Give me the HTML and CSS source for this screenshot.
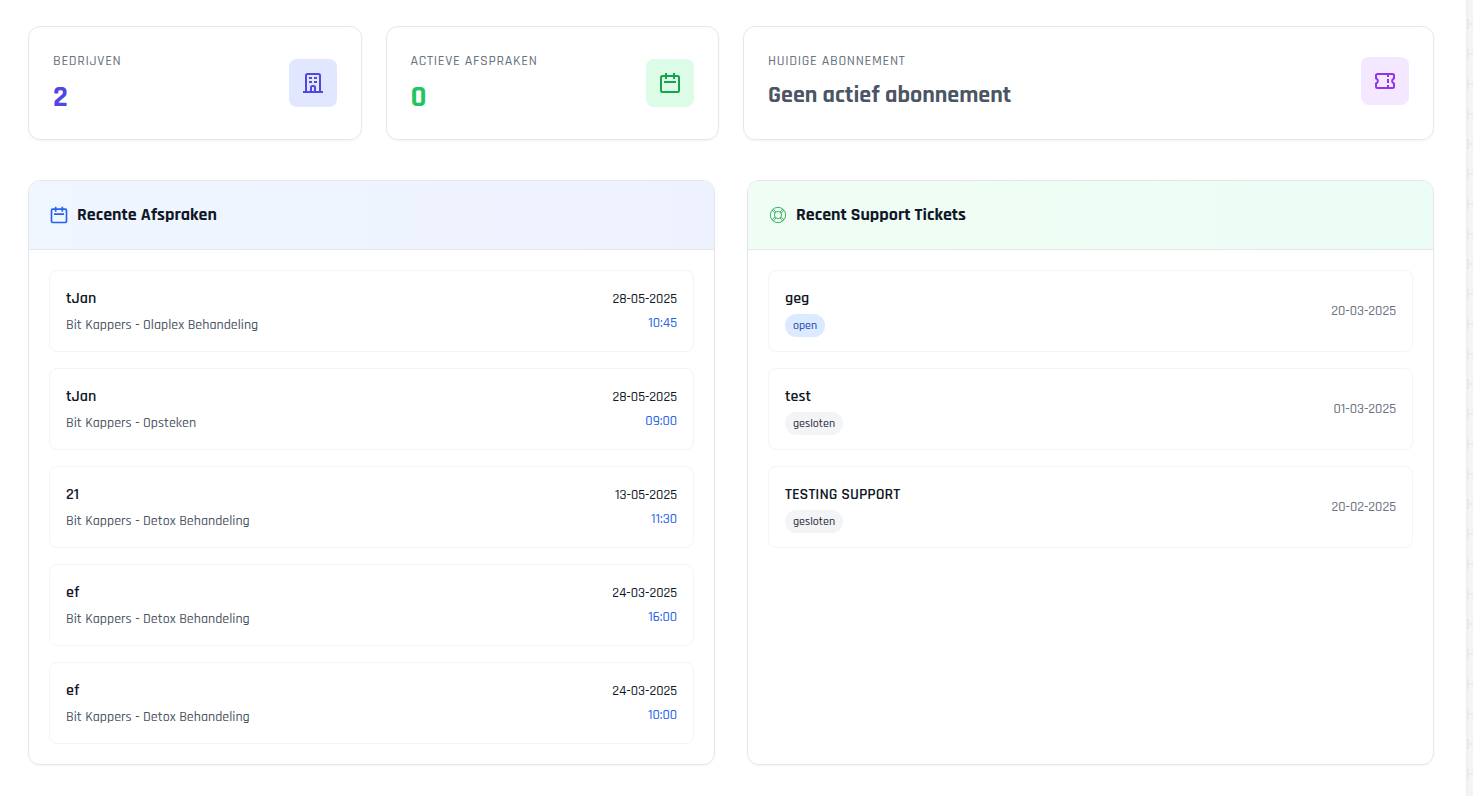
FILE: index.html
```html
<!DOCTYPE html>
<html lang="nl">
<head>
  <meta charset="UTF-8">
  <meta name="viewport" content="width=device-width, initial-scale=1.0">
  <title>Dashboard</title>
  <link rel="stylesheet" href="styles.css">
</head>
<body>

  <!-- shared icons -->
  <svg class="sprite" aria-hidden="true">
    <symbol id="icon-building" viewBox="0 0 24 24">
      <path d="M2 21H22M5 21V4.500Q5 3 6.500 3H17.500Q19 3 19 4.500V21M10 21V16.500Q10 15 11.500 15H12.500Q14 15 14 16.500V21" fill="none" stroke="currentColor" stroke-width="2"/>
      <path d="M8 7H11M13 7H16M8 11H11M13 11H16" fill="none" stroke="currentColor" stroke-width="2"/>
    </symbol>
    <symbol id="icon-calendar" viewBox="0 0 24 24">
      <rect x="3" y="5" width="18" height="16" rx="1.500" fill="none" stroke="currentColor" stroke-width="2"/>
      <path d="M8 2V8M16 2V8M6 11H18" fill="none" stroke="currentColor" stroke-width="2"/>
    </symbol>
    <symbol id="icon-ticket" viewBox="0 0 24 24">
      <path d="M4.500 5H19.500Q21 5 21 6.500V9.500A2.600 2.600 0 0 0 21 14.500V17.500Q21 19 19.500 19H4.500Q3 19 3 17.500V14.500A2.600 2.600 0 0 0 3 9.500V6.500Q3 5 4.500 5Z" fill="none" stroke="currentColor" stroke-width="2" stroke-linejoin="round"/>
      <path d="M15 6V8M15 10V14M15 16V18" fill="none" stroke="currentColor" stroke-width="2"/>
    </symbol>
    <symbol id="icon-lifebuoy" viewBox="0 0 24 24">
      <g fill="none" stroke="currentColor" stroke-width="1">
        <circle cx="12" cy="12" r="9.200"/>
        <circle cx="12" cy="12" r="4.300"/>
        <path d="M4.800 6.300L8.300 9.600M6.300 4.800L9.600 8.300M17.700 4.800L14.400 8.300M19.200 6.300L15.700 9.600M19.200 17.700L15.700 14.400M17.700 19.200L14.400 15.700M6.300 19.200L9.600 15.700M4.800 17.700L8.300 14.400"/>
      </g>
    </symbol>
  </svg>

  <main class="page">
    <section class="stats">
      <div class="stat">
        <div>
          <p class="stat-label">Bedrijven</p>
          <p class="stat-value indigo">2</p>
        </div>
        <span class="stat-icon bg-indigo"><svg><use href="#icon-building"/></svg></span>
      </div>
      <div class="stat">
        <div>
          <p class="stat-label">Actieve afspraken</p>
          <p class="stat-value green">0</p>
        </div>
        <span class="stat-icon bg-green"><svg><use href="#icon-calendar"/></svg></span>
      </div>
      <div class="stat wide">
        <div>
          <p class="stat-label">Huidige abonnement</p>
          <p class="stat-plan">Geen actief abonnement</p>
        </div>
        <span class="stat-icon bg-purple"><svg><use href="#icon-ticket"/></svg></span>
      </div>
    </section>

    <div class="panels">
      <section class="panel">
        <header class="panel-header blue">
          <svg><use href="#icon-calendar"/></svg>
          <h2>Recente Afspraken</h2>
        </header>
        <ul class="list">
          <li class="item">
            <div>
              <p class="name">tJan</p>
              <p class="detail">Bit Kappers - Olaplex Behandeling</p>
            </div>
            <div class="when">
              <p>28-05-2025</p>
              <p class="time">10:45</p>
            </div>
          </li>
          <li class="item">
            <div>
              <p class="name">tJan</p>
              <p class="detail">Bit Kappers - Opsteken</p>
            </div>
            <div class="when">
              <p>28-05-2025</p>
              <p class="time">09:00</p>
            </div>
          </li>
          <li class="item">
            <div>
              <p class="name">21</p>
              <p class="detail">Bit Kappers - Detox Behandeling</p>
            </div>
            <div class="when">
              <p>13-05-2025</p>
              <p class="time">11:30</p>
            </div>
          </li>
          <li class="item">
            <div>
              <p class="name">ef</p>
              <p class="detail">Bit Kappers - Detox Behandeling</p>
            </div>
            <div class="when">
              <p>24-03-2025</p>
              <p class="time">16:00</p>
            </div>
          </li>
          <li class="item">
            <div>
              <p class="name">ef</p>
              <p class="detail">Bit Kappers - Detox Behandeling</p>
            </div>
            <div class="when">
              <p>24-03-2025</p>
              <p class="time">10:00</p>
            </div>
          </li>
        </ul>
      </section>

      <section class="panel">
        <header class="panel-header mint">
          <svg><use href="#icon-lifebuoy"/></svg>
          <h2>Recent Support Tickets</h2>
        </header>
        <ul class="list">
          <li class="item">
            <div>
              <p class="name">geg</p>
              <p class="detail"><span class="badge open">open</span></p>
            </div>
            <p class="date">20-03-2025</p>
          </li>
          <li class="item">
            <div>
              <p class="name">test</p>
              <p class="detail"><span class="badge">gesloten</span></p>
            </div>
            <p class="date">01-03-2025</p>
          </li>
          <li class="item">
            <div>
              <p class="name">TESTING SUPPORT</p>
              <p class="detail"><span class="badge">gesloten</span></p>
            </div>
            <p class="date">20-02-2025</p>
          </li>
        </ul>
      </section>
    </div>
  </main>

</body>
</html>
```
FILE: styles.css
```css
* {
  box-sizing: border-box;
  margin: 0;
  padding: 0;
}
body {
  font-family: Rajdhani, Roboto, sans-serif;
  font-size: 14px;
  font-weight: 500;
  line-height: 20px;
  color: #111827;
  /* tick pattern showing beside the page */
  background:
    repeating-linear-gradient(#f3f4f6 0 19px, transparent 19px 29px, #f3f4f6 29px 30px) right 4px top / 2px 100% no-repeat,
    repeating-linear-gradient(#f3f4f6 0 23px, transparent 23px 25px, #f3f4f6 25px 30px) right top / 4px 100% no-repeat,
    linear-gradient(#e9ebee, #e9ebee) right top / 6px 100% no-repeat,
    #f3f4f6;
}
.sprite {
  display: none;
}
.page {
  min-height: 100vh;
  margin-right: 7px;
  padding: 26px 32px 31px 28px;
  background: #fff;
  box-shadow: 0 0 3px rgba(0, 0, 0, 0.06);
}

/* stat cards */
.stats {
  display: grid;
  grid-template-columns: repeat(4, 1fr);
  gap: 24px;
  margin-bottom: 40px;
}
.stat {
  display: flex;
  justify-content: space-between;
  align-items: center;
  padding: 24px;
  border: 1px solid #e5e7eb;
  border-radius: 12px;
  box-shadow: 0 1px 2px rgba(0, 0, 0, 0.05);
}
.stat.wide {
  grid-column: span 2;
  align-items: flex-start;
}
.stat.wide .stat-icon {
  margin-top: 6px;
}
.stat-label {
  margin-bottom: 8px;
  font-size: 14px;
  color: #6b7280;
  text-transform: uppercase;
  letter-spacing: 0.05em;
}
.stat-value {
  font-size: 30px;
  font-weight: 700;
  line-height: 36px;
}
.stat-plan {
  font-size: 24px;
  font-weight: 700;
  line-height: 32px;
  color: #4b5563;
}
.indigo {
  color: #4f46e5;
}
.green {
  color: #22c55e;
}
.stat-icon {
  padding: 12px;
  border-radius: 8px;
}
.stat-icon svg {
  display: block;
  width: 24px;
  height: 24px;
}
.bg-indigo {
  background: #e0e7ff;
  color: #4f46e5;
}
.bg-green {
  background: #dcfce7;
  color: #16a34a;
}
.bg-purple {
  background: #f3e8ff;
  color: #9333ea;
}

/* panels */
.panels {
  display: grid;
  grid-template-columns: 1fr 1fr;
  gap: 32px;
}
.panel {
  border: 1px solid #e5e7eb;
  border-radius: 12px;
  overflow: hidden;
  box-shadow: 0 1px 2px rgba(0, 0, 0, 0.05);
}
.panel-header {
  display: flex;
  align-items: center;
  gap: 8px;
  padding: 20px;
  border-bottom: 1px solid #e5e7eb;
}
.panel-header svg {
  width: 20px;
  height: 20px;
}
.panel-header h2 {
  font-size: 18px;
  font-weight: 700;
  line-height: 28px;
  color: #111827;
}
.blue {
  background: linear-gradient(to right, #eff6ff, #eef2ff);
  color: #2563eb;
}
.mint {
  background: linear-gradient(to right, #f0fdf4, #ecfdf5);
  color: #16a34a;
}
.list {
  display: grid;
  gap: 16px;
  padding: 20px;
  list-style: none;
}
.item {
  display: flex;
  justify-content: space-between;
  align-items: center;
  padding: 16px;
  border: 1px solid #f3f4f6;
  border-radius: 8px;
}
.name {
  margin-bottom: 4px;
  font-size: 16px;
  font-weight: 600;
  line-height: 24px;
}
.detail {
  color: #4b5563;
}
.when {
  text-align: right;
}
.time {
  margin-top: 4px;
  color: #2563eb;
}
.date {
  color: #6b7280;
}
.badge {
  padding: 4px 8px;
  border-radius: 12px;
  font-size: 12px;
  line-height: 16px;
  background: #f3f4f6;
  color: #1f2937;
}
.badge.open {
  background: #dbeafe;
  color: #1e40af;
}
```
